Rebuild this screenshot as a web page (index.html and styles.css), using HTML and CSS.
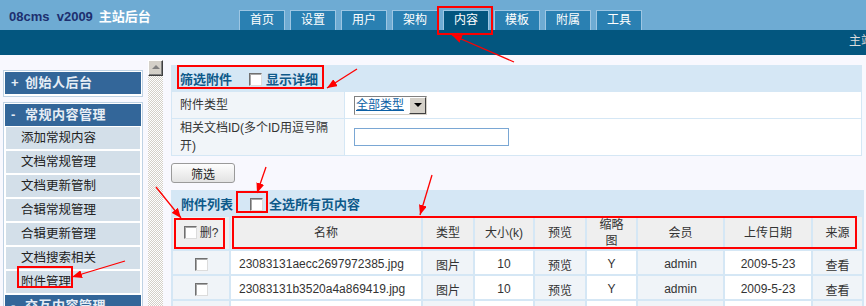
FILE: index.html
```html
<!DOCTYPE html>
<html lang="zh-CN">
<head>
    <meta charset="UTF-8">
    <title>08cms v2009 主站后台</title>
    <link rel="stylesheet" href="styles.css">
</head>
<body>
    <div class="top-bar">
        <div class="logo"><span class="logo-ver">08cms&nbsp; v2009</span><span class="logo-name">主站后台</span></div>
        <ul class="tabs">
            <li>首页</li>
            <li>设置</li>
            <li>用户</li>
            <li>架构</li>
            <li class="active">内容</li>
            <li>模板</li>
            <li>附属</li>
            <li>工具</li>
        </ul>
    </div>
    <div class="sub-bar">主站首页 | 退出</div>

    <div class="layout">
        <!-- left menu -->
        <div class="side">
            <div class="menu">
                <div class="menu-head"><span class="sign">+</span>创始人后台</div>
            </div>
            <div class="menu">
                <div class="menu-head"><span class="sign">-</span>常规内容管理</div>
                <div class="menu-item">添加常规内容</div>
                <div class="menu-item">文档常规管理</div>
                <div class="menu-item">文档更新管制</div>
                <div class="menu-item">合辑常规管理</div>
                <div class="menu-item">合辑更新管理</div>
                <div class="menu-item">文档搜索相关</div>
                <div class="menu-item">附件管理</div>
                <div class="menu-head"><span class="sign">-</span>交互内容管理</div>
            </div>
        </div>

        <div class="scroll"><div class="scroll-up"></div></div>

        <!-- main area -->
        <div class="main">
            <table class="grid filter">
                <colgroup><col style="width: 173px"><col></colgroup>
                <tr class="grid-head">
                    <th colspan="2">筛选附件<input type="checkbox" class="chk head-chk">显示详细</th>
                </tr>
                <tr class="row-type">
                    <td class="label">附件类型</td>
                    <td class="value">
                        <span class="select"><span class="select-text">全部类型</span><span class="select-btn"></span></span>
                    </td>
                </tr>
                <tr class="row-ids">
                    <td class="label">相关文档ID(多个ID用逗号隔<br>开)</td>
                    <td class="value"><input type="text" class="text-input"></td>
                </tr>
            </table>

            <button class="btn">筛选</button>

            <table class="grid list">
                <colgroup>
                    <col style="width: 58px">
                    <col style="width: 192px">
                    <col style="width: 52px">
                    <col style="width: 60px">
                    <col style="width: 52px">
                    <col style="width: 51px">
                    <col style="width: 87px">
                    <col style="width: 88px">
                    <col style="width: 51px">
                </colgroup>
                <tr class="grid-head">
                    <th colspan="9">附件列表<input type="checkbox" class="chk head-chk">全选所有页内容</th>
                </tr>
                <tr class="col-head">
                    <td><input type="checkbox" class="chk">删?</td>
                    <td>名称</td>
                    <td>类型</td>
                    <td>大小(k)</td>
                    <td>预览</td>
                    <td>缩略<br>图</td>
                    <td>会员</td>
                    <td>上传日期</td>
                    <td>来源</td>
                </tr>
                <tr class="data">
                    <td><input type="checkbox" class="chk"></td>
                    <td class="name">23083131aecc2697972385.jpg</td>
                    <td>图片</td>
                    <td>10</td>
                    <td>预览</td>
                    <td>Y</td>
                    <td>admin</td>
                    <td>2009-5-23</td>
                    <td>查看</td>
                </tr>
                <tr class="data">
                    <td><input type="checkbox" class="chk"></td>
                    <td class="name">23083131b3520a4a869419.jpg</td>
                    <td>图片</td>
                    <td>10</td>
                    <td>预览</td>
                    <td>Y</td>
                    <td>admin</td>
                    <td>2009-5-23</td>
                    <td>查看</td>
                </tr>
                <tr class="data">
                    <td><input type="checkbox" class="chk"></td>
                    <td class="name">23083131c0a9e1b4735210.jpg</td>
                    <td>图片</td>
                    <td>12</td>
                    <td>预览</td>
                    <td>Y</td>
                    <td>admin</td>
                    <td>2009-5-23</td>
                    <td>查看</td>
                </tr>
            </table>
        </div>
    </div>

    <!-- red review marks drawn over the screen -->
    <svg class="marks" width="866" height="306" viewBox="0 0 866 306">
        <defs>
            <marker id="head" markerWidth="10" markerHeight="8" refX="10" refY="4" orient="auto" markerUnits="userSpaceOnUse">
                <path d="M0,0 L10,4 L0,8 z" fill="#ff0000"/>
            </marker>
        </defs>
        <g fill="none" stroke="#ff0000" stroke-width="2">
            <rect x="438" y="7" width="54" height="27"/>
            <rect x="178" y="66" width="145" height="22"/>
            <rect x="237" y="192" width="30" height="20"/>
            <rect x="175" y="219" width="49" height="29"/>
            <rect x="233" y="217" width="623" height="31"/>
            <rect x="18" y="267" width="54" height="20"/>
        </g>
        <g stroke="#ff0000" stroke-width="1.3" marker-end="url(#head)">
            <line x1="514" y1="62" x2="452" y2="35"/>
            <line x1="357" y1="69" x2="327" y2="88"/>
            <line x1="266" y1="167" x2="257" y2="193"/>
            <line x1="432" y1="175" x2="420" y2="215"/>
            <line x1="156" y1="187" x2="181" y2="218"/>
            <line x1="125" y1="261" x2="72" y2="277"/>
        </g>
    </svg>
</body>
</html>
```

FILE: styles.css
```css
* {
    box-sizing: border-box;
}

html,
body {
    overflow: hidden;
}

body {
    margin: 0;
    background-color: #f8f8fe;
    font-family: "Liberation Sans", "Noto Sans CJK SC", sans-serif;
    font-size: 12px;
    color: #333;
}

/* header */
.top-bar {
    height: 30px;
    background-color: #6eabd3;
    display: flex;
    align-items: flex-end;
}

.logo {
    width: 239px;
    padding-left: 9px;
    align-self: center;
    font-size: 13px;
    font-weight: bold;
    white-space: nowrap;
}

.logo-ver {
    color: #1d2f6f;
}

.logo-name {
    color: #fff;
    margin-left: 6px;
}

.tabs {
    display: flex;
    gap: 5px;
    list-style: none;
    margin: 0;
    padding: 0;
}

.tabs li {
    width: 46px;
    height: 20px;
    line-height: 19px;
    text-align: center;
    color: #fff;
    background-color: #2a80b2;
    border: 1px solid #9dc6e3;
    border-bottom: none;
}

.tabs li.active {
    background-color: #03567f;
}

.sub-bar {
    height: 25px;
    line-height: 23px;
    padding-left: 849px;
    background-color: #03567f;
    color: #dcdcdc;
    white-space: nowrap;
    overflow: hidden;
}

/* body layout */
.layout {
    display: flex;
    align-items: flex-start;
}

.side {
    width: 140px;
    margin-left: 3px;
    padding-top: 15px;
}

.menu {
    border: 1px solid #bfd2e4;
    padding: 1px;
    background-color: #fff;
    margin-bottom: 5px;
}

.menu-head {
    height: 22px;
    line-height: 22px;
    padding-left: 6px;
    margin-bottom: 1px;
    background-color: #336699;
    color: #e6edf5;
    font-size: 13px;
    font-weight: bold;
    letter-spacing: 0.5px;
    white-space: nowrap;
}

.menu-head .sign {
    display: inline-block;
    width: 14px;
}

.menu-item {
    height: 22px;
    line-height: 22px;
    margin: 0 1px 2px;
    padding-left: 15px;
    background-color: #d3dfe9;
    color: #222;
    font-size: 12.5px;
}

.scroll {
    width: 15px;
    height: 260px;
    margin-left: 5px;
    margin-top: 5px;
    background-image: repeating-conic-gradient(#d4d0c8 0 25%, #fff 0 50%);
    background-size: 2px 2px;
}

.scroll-up {
    height: 16px;
    display: flex;
    align-items: center;
    justify-content: center;
    background-color: #d4d0c8;
    border: 1px solid;
    border-color: #fff #404040 #404040 #fff;
    box-shadow: inset -1px -1px #808080;
}

.scroll-up::after {
    content: "";
    border-left: 4px solid transparent;
    border-right: 4px solid transparent;
    border-bottom: 4px solid #808080;
    margin-top: -2px;
}

.main {
    width: 691px;
    margin-left: 8px;
    padding-top: 10px;
}

/* tables */
.grid {
    width: 100%;
    border-collapse: collapse;
    table-layout: fixed;
}

.grid-head th {
    height: 26px;
    padding: 0 0 0 8px;
    background-color: #d5e7f5;
    color: #0e5a8a;
    font-size: 13px;
    font-weight: bold;
    text-align: left;
    white-space: nowrap;
}

.chk {
    appearance: none;
    -webkit-appearance: none;
    width: 13px;
    height: 13px;
    margin: 0;
    vertical-align: -2px;
    background-color: #fff;
    border: 1px solid;
    border-color: #707070 #dcdcdc #dcdcdc #707070;
    box-shadow: inset 1px 1px #a8a8a8;
}

.head-chk {
    margin: 0 4px 0 17px;
}

.list .head-chk {
    margin-right: 6px;
}

.col-head .chk {
    margin-right: 3px;
}

.filter td,
.filter th {
    border: 1px solid #d5e7f5;
}

.filter .label {
    padding: 0 8px;
    background-color: #f1f5f9;
    line-height: 18px;
}

.filter .value {
    padding-left: 9px;
    background-color: #fff;
}

.row-type td {
    height: 27px;
}

.row-ids td {
    height: 37px;
}

.select {
    display: inline-flex;
    width: 73px;
    height: 19px;
    vertical-align: middle;
    background-color: #fff;
    border: 1px solid;
    border-color: #808080 #d4d0c8 #d4d0c8 #808080;
}

.select-text {
    flex: 1;
    padding-left: 1px;
    line-height: 16px;
    color: #0b5fa5;
    text-decoration: underline;
}

.select-btn {
    width: 17px;
    display: flex;
    align-items: center;
    justify-content: center;
    background-color: #d4d0c8;
    border: 1px solid;
    border-color: #fff #404040 #404040 #fff;
}

.select-btn::after {
    content: "";
    border-left: 4px solid transparent;
    border-right: 4px solid transparent;
    border-top: 4px solid #000;
}

.text-input {
    display: block;
    width: 155px;
    height: 18px;
    margin: 0;
    border: 1px solid #7aa7d4;
    background-color: #fff;
}

.btn {
    display: block;
    width: 64px;
    height: 20px;
    margin-top: 7px;
    padding: 0;
    font-family: inherit;
    font-size: 12px;
    color: #222;
    background: linear-gradient(#fdfdfd, #e2e2e2);
    border: 1px solid #9a9a9a;
    border-radius: 3px;
}

.list {
    margin-top: 7px;
    border: 2px solid #d5e7f5;
}

.list .grid-head th {
    height: 25px;
}

.list td {
    border: 2px solid #d5e7f5;
    text-align: center;
    padding: 0;
    white-space: nowrap;
}

.col-head td {
    height: 33px;
    line-height: 16px;
    background-color: #efefef;
}

.data td {
    height: 25px;
    padding-top: 3px;
    background-color: #f0f4f8;
}

.data td:nth-child(even) {
    background-color: #fff;
}

.data .name {
    text-align: left;
    padding-left: 8px;
}

.data .chk {
    vertical-align: middle;
}

.marks {
    position: absolute;
    top: 0;
    left: 0;
    pointer-events: none;
}
```
